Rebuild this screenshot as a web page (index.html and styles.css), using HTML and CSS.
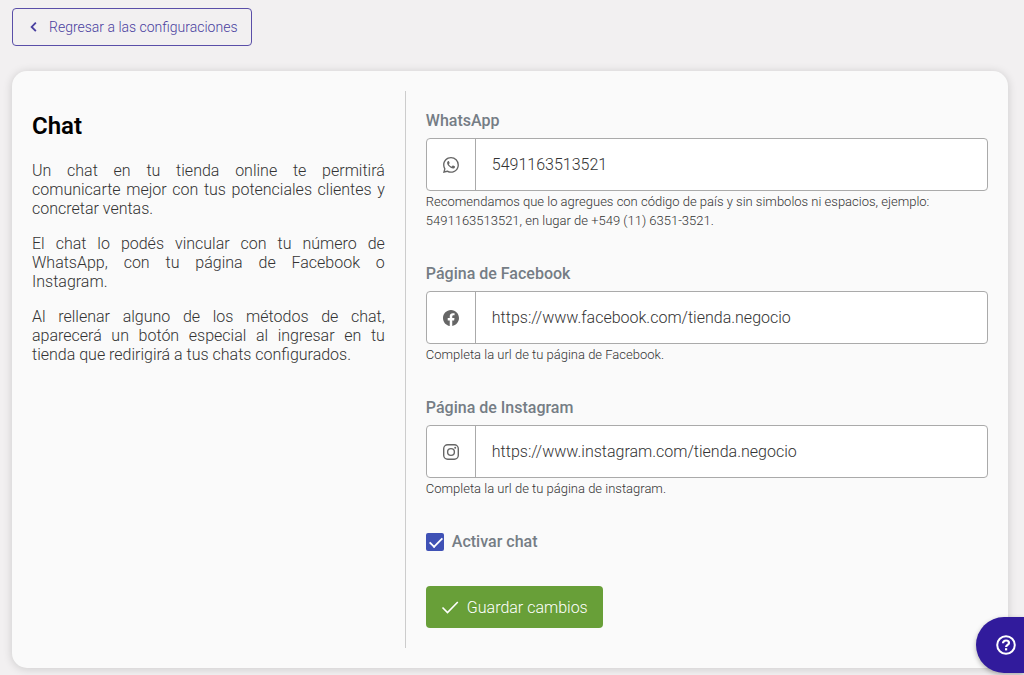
FILE: index.html
```html
<!DOCTYPE html>
<html lang="es">
<head>
    <meta charset="UTF-8">
    <meta name="viewport" content="width=device-width, initial-scale=1.0">
    <title>Chat</title>
    <link rel="stylesheet" href="styles.css">
</head>
<body>
    <main class="page">
        <a class="btn-back" href="#">
            <svg class="icon-back" viewBox="0 0 12 12" aria-hidden="true">
                <path d="M7.600 2.300 4 5.900l3.600 3.600" fill="none" stroke="currentColor" stroke-width="1.6"/>
            </svg>
            Regresar a las configuraciones
        </a>

        <div class="card">
            <section class="info">
                <h1>Chat</h1>
                <p>Un chat en tu tienda online te permitirá comunicarte mejor con tus potenciales clientes y concretar ventas.</p>
                <p>El chat lo podés vincular con tu número de WhatsApp, con tu página de Facebook o Instagram.</p>
                <p>Al rellenar alguno de los métodos de chat, aparecerá un botón especial al ingresar en tu tienda que redirigirá a tus chats configurados.</p>
            </section>

            <form class="form">
                <div class="field">
                    <label for="whatsapp">WhatsApp</label>
                    <div class="input-group">
                        <span class="input-icon">
                            <svg viewBox="0 0 16 16" aria-hidden="true">
                                <path fill="currentColor" d="M13.601 2.326A7.854 7.854 0 0 0 7.994 0C3.627 0 .068 3.558.064 7.926c0 1.399.366 2.76 1.057 3.965L0 16l4.204-1.102a7.933 7.933 0 0 0 3.79.965h.004c4.368 0 7.926-3.558 7.93-7.93A7.898 7.898 0 0 0 13.6 2.326zM7.994 14.521a6.573 6.573 0 0 1-3.356-.92l-.24-.144-2.494.654.666-2.433-.156-.251a6.56 6.56 0 0 1-1.007-3.505c0-3.626 2.957-6.584 6.591-6.584a6.56 6.56 0 0 1 4.66 1.931 6.557 6.557 0 0 1 1.928 4.66c-.004 3.639-2.961 6.592-6.592 6.592z"/>
                                <path fill="currentColor" d="M5.400 4c.3 0 .5.1.6.4l.6 1.400c.1.3 0 .5-.6 1.200-.2.2-.2.3 0 .6.6.9 1.300 1.500 2.300 2 .3.1.4.1.6-.1l.7-.9c.2-.2.4-.2.6-.1l1.500.8c.3.2.4.3.3.7-.2 1-1.100 1.500-2 1.500-2.400-.2-5.700-3-5.900-5.500 0-.9.5-2 1.300-2z"/>
                            </svg>
                        </span>
                        <input type="text" id="whatsapp" value="5491163513521">
                    </div>
                    <small>Recomendamos que lo agregues con código de país y sin simbolos ni espacios, ejemplo: 5491163513521, en lugar de +549 (11) 6351-3521.</small>
                </div>

                <div class="field">
                    <label for="facebook">Página de Facebook</label>
                    <div class="input-group">
                        <span class="input-icon">
                            <svg viewBox="0 0 16 16" aria-hidden="true">
                                <path fill="currentColor" d="M16 8.049c0-4.446-3.582-8.050-8-8.050C3.580 0-.002 3.603-.002 8.050c0 4.017 2.926 7.347 6.750 7.951v-5.625h-2.030V8.050H6.750V6.275c0-2.017 1.195-3.131 3.022-3.131.876 0 1.791.157 1.791.157v1.980h-1.009c-.993 0-1.303.621-1.303 1.258v1.510h2.218l-.354 2.326H9.250V16c3.824-.604 6.750-3.934 6.750-7.951z"/>
                            </svg>
                        </span>
                        <input type="text" id="facebook" value="https://www.facebook.com/tienda.negocio">
                    </div>
                    <small>Completa la url de tu página de Facebook.</small>
                </div>

                <div class="field">
                    <label for="instagram">Página de Instagram</label>
                    <div class="input-group">
                        <span class="input-icon">
                            <svg viewBox="0 0 16 16" aria-hidden="true">
                                <rect x="0.700" y="0.700" width="14.600" height="14.600" rx="4" fill="none" stroke="currentColor" stroke-width="1.400"/>
                                <circle cx="8" cy="8" r="3.400" fill="none" stroke="currentColor" stroke-width="1.400"/>
                                <circle cx="12.200" cy="3.800" r="1" fill="currentColor"/>
                            </svg>
                        </span>
                        <input type="text" id="instagram" value="https://www.instagram.com/tienda.negocio">
                    </div>
                    <small>Completa la url de tu página de instagram.</small>
                </div>

                <div class="check">
                    <input type="checkbox" id="activar" checked>
                    <label for="activar">Activar chat</label>
                </div>

                <button type="submit" class="btn-save">
                    <svg class="icon-save" viewBox="0 0 18 18" aria-hidden="true">
                        <path d="M1.500 9.500 6.500 14.500 16.800 4" fill="none" stroke="currentColor" stroke-width="1.600"/>
                    </svg>
                    Guardar cambios
                </button>
            </form>
        </div>
    </main>

    <button type="button" class="help" aria-label="Ayuda">
        <svg viewBox="0 0 20 20" aria-hidden="true">
            <circle cx="10" cy="10" r="8.800" fill="none" stroke="currentColor" stroke-width="2"/>
            <path d="M7 8.200c0-1.700 1.300-2.700 3-2.700s3 1 3 2.500c0 1.900-2.900 2-2.900 4" fill="none" stroke="currentColor" stroke-width="2.200"/>
            <rect x="9" y="13.200" width="2.200" height="2.200" fill="currentColor"/>
        </svg>
    </button>
</body>
</html>
```
FILE: styles.css
```css
* {
    margin: 0;
    padding: 0;
    box-sizing: border-box;
}

body {
    font-family: Roboto, 'Liberation Sans', sans-serif;
    font-size: 16px;
    font-weight: 300;
    line-height: 19px;
    color: #333;
    background: #f2f0f1;
}

.page {
    padding: 8px 16px 8px 12px;
}

.btn-back {
    display: inline-flex;
    align-items: center;
    gap: 8px;
    height: 38px;
    padding: 0 14px;
    border: 1px solid #5a4fa8;
    border-radius: 4px;
    color: #4a40a0;
    font-size: 14px;
    text-decoration: none;
}

.icon-back {
    width: 14px;
    height: 14px;
}

.card {
    display: grid;
    grid-template-columns: 39% 1fr;
    margin-top: 25px;
    padding: 20px;
    background: #fafafa;
    border-radius: 15px;
    box-shadow: 0 1px 10px rgba(0, 0, 0, 0.16);
}

.info {
    padding: 20px 20px 20px 0;
    text-align: justify;
}

.info h1 {
    margin-bottom: 20px;
    color: #000;
    font-size: 24px;
    font-weight: 600;
    line-height: 30px;
}

.info p {
    margin-bottom: 16px;
}

.form {
    padding: 20px 0 20px 20px;
    border-left: 1px solid #ccc;
}

.field {
    margin-bottom: 34px;
}

.form label {
    display: block;
    color: #757d85;
    font-weight: 500;
}

.input-group {
    display: flex;
    height: 53px;
    margin: 8px 0 1px;
    background: #fff;
    border: 1px solid #aaa;
    border-radius: 4px;
}

.input-icon {
    display: flex;
    align-items: center;
    justify-content: center;
    width: 49px;
    border-right: 1px solid #aaa;
    color: #666;
}

.input-icon svg {
    width: 16px;
    height: 16px;
}

.input-group input {
    flex: 1;
    min-width: 0;
    padding: 0 16px;
    border: 0;
    outline: 0;
    background: none;
    color: #333;
    font: inherit;
}

.field small {
    display: block;
    font-size: 13px;
}

.check {
    display: flex;
    align-items: center;
    gap: 8px;
    margin-bottom: 35px;
}

.check input {
    appearance: none;
    width: 18px;
    height: 18px;
    border-radius: 2px;
    background: #3f51b5;
}

/* tilde del checkbox */
.check input:checked::before {
    content: '';
    display: block;
    width: 12px;
    height: 6px;
    margin: 4px 3px;
    border-left: 2px solid #fff;
    border-bottom: 2px solid #fff;
    transform: rotate(-45deg) scale(0.9);
}

.btn-save {
    display: flex;
    align-items: center;
    gap: 8px;
    height: 42px;
    padding: 0 15px;
    border: 0;
    border-radius: 4px;
    background: #689f38;
    color: #fff;
    font: inherit;
    cursor: pointer;
}

.icon-save {
    width: 18px;
    height: 18px;
}

.help {
    position: fixed;
    right: 0;
    bottom: 2px;
    display: flex;
    align-items: center;
    width: 48px;
    height: 56px;
    padding-left: 20px;
    border: 0;
    border-radius: 28px 0 0 28px;
    background: #311b9c;
    color: #fff;
    box-shadow: 0 2px 5px rgba(0, 0, 0, 0.3);
    cursor: pointer;
}

.help svg {
    width: 20px;
    height: 20px;
}
```
